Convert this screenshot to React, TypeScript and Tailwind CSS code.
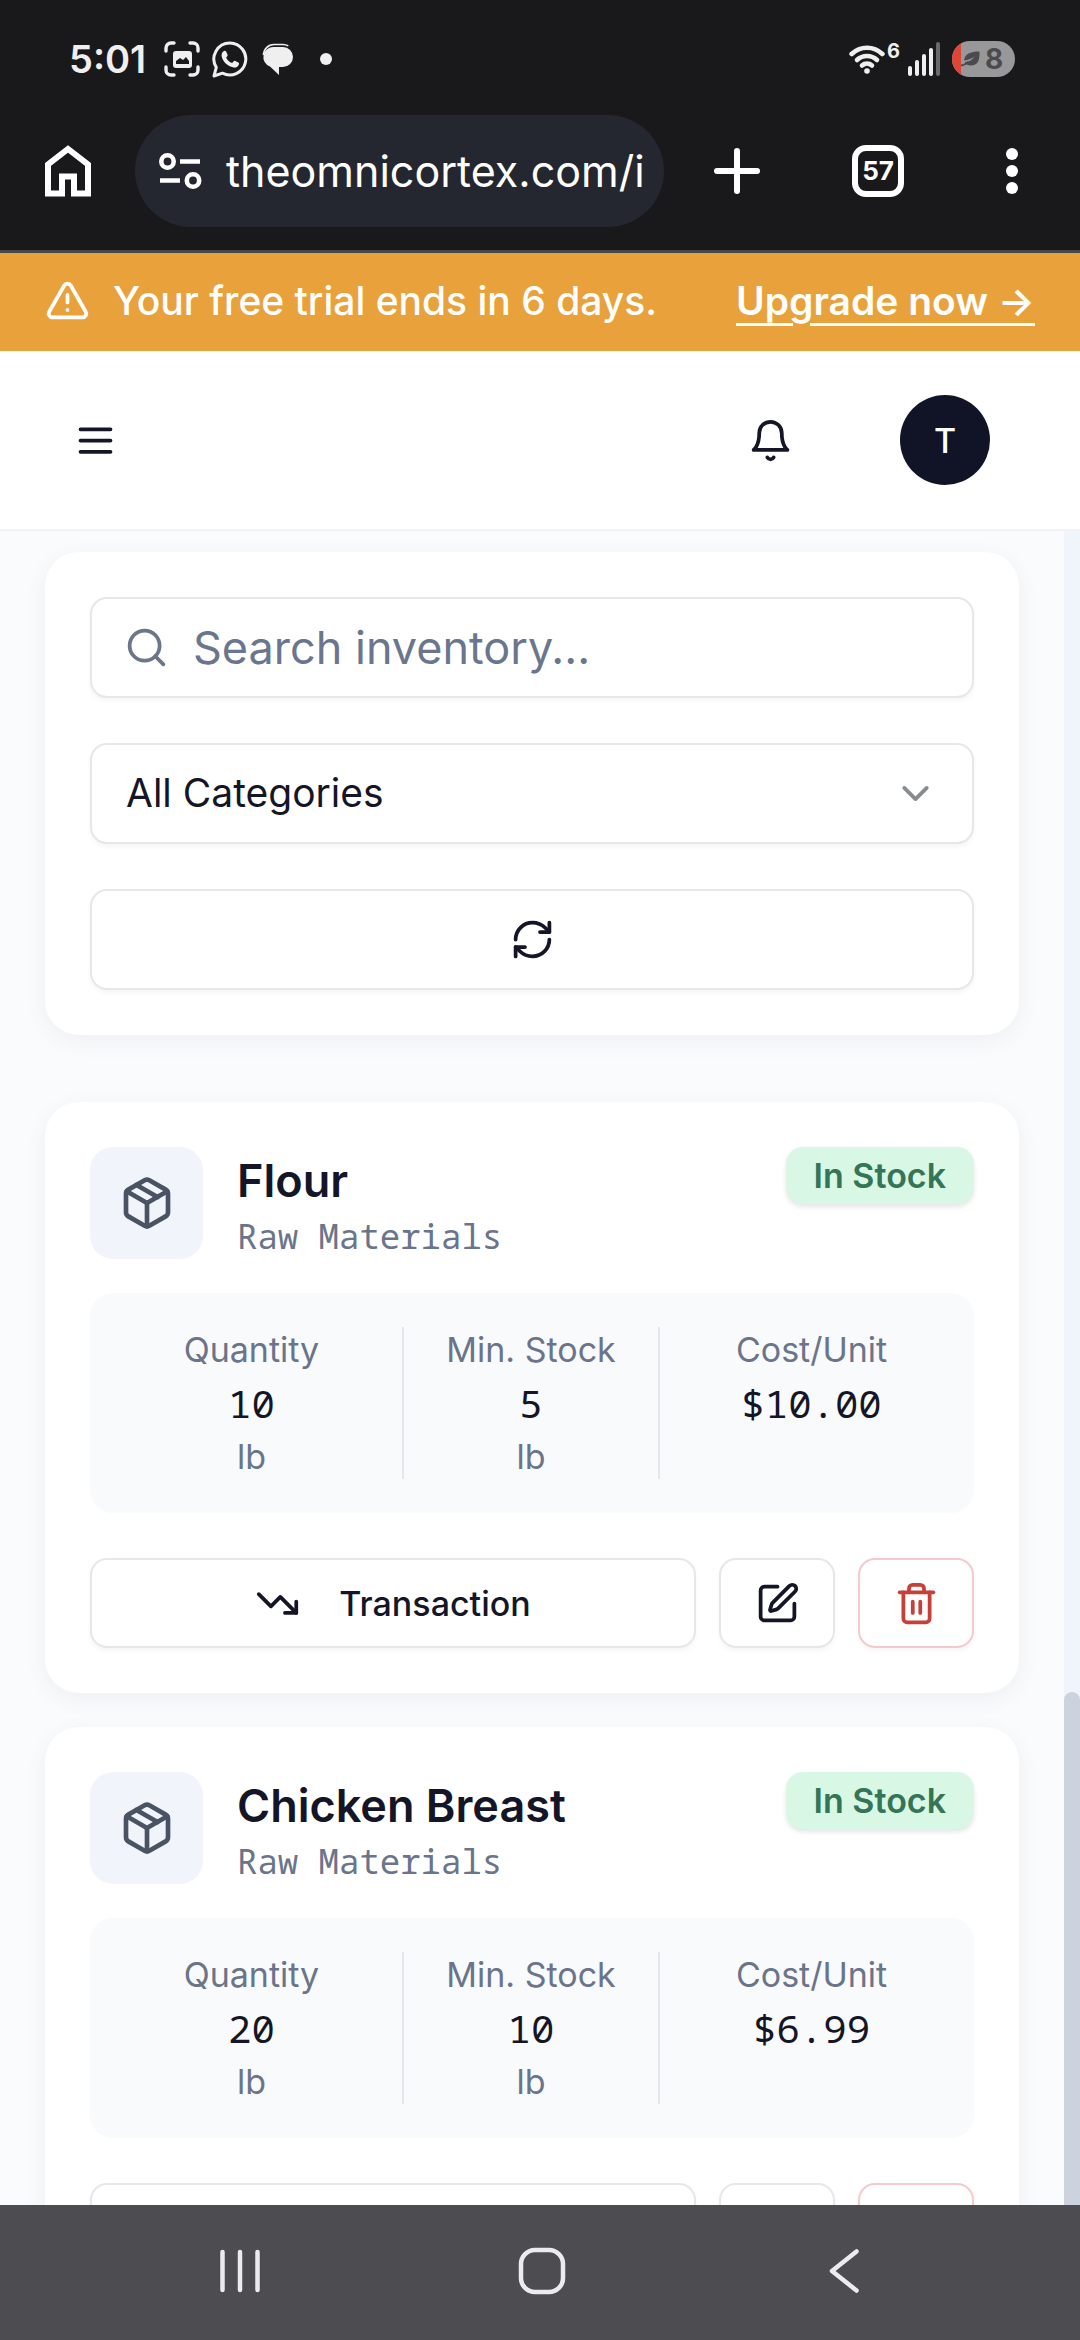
import { useState, type ReactNode } from 'react'
import {
  ChevronDown,
  Package,
  RefreshCw,
  Search,
  SquarePen,
  Trash2,
  TrendingDown,
  TriangleAlert,
} from 'lucide-react'

interface InventoryItem {
  id: string
  name: string
  category: string
  status: string
  quantity: number
  minStock: number
  unit: string
  cost: number
}

const items: InventoryItem[] = [
  {
    id: 'flour',
    name: 'Flour',
    category: 'Raw Materials',
    status: 'In Stock',
    quantity: 10,
    minStock: 5,
    unit: 'lb',
    cost: 10,
  },
  {
    id: 'chicken-breast',
    name: 'Chicken Breast',
    category: 'Raw Materials',
    status: 'In Stock',
    quantity: 20,
    minStock: 10,
    unit: 'lb',
    cost: 6.99,
  },
]

const mono = "font-['Noto_Sans_Mono','Liberation_Mono',monospace]"
const cardStyle = 'rounded-[34px] bg-white p-[45px] shadow-[0_6px_24px_rgba(15,23,42,0.05)]'
const fieldStyle =
  'h-[101px] w-full rounded-[17px] border-2 border-[#e5e7e9] bg-white shadow-[0_3px_5px_rgba(0,0,0,0.04)]'

function StatusBar() {
  return (
    <div className="flex h-[115px] items-center justify-between pt-[3px] pr-[65px] pl-[69px] text-[#efefef]">
      <div className="flex items-center">
        <span className="text-[38px] leading-10 font-semibold">5:01</span>
        <svg className="ml-[18px] h-9 w-9" viewBox="0 0 36 36" fill="none" aria-hidden="true">
          <path
            d="M2 10V7a5 5 0 0 1 5-5h3M26 2h3a5 5 0 0 1 5 5v3M34 26v3a5 5 0 0 1-5 5h-3M10 34H7a5 5 0 0 1-5-5v-3"
            stroke="currentColor"
            strokeWidth="3.4"
            strokeLinecap="round"
          />
          <rect x="9" y="10" width="19" height="17" rx="3" fill="currentColor" />
          <path d="M12 23v-3l4-3 3 2 3-3 3 4v3z" fill="#19191b" />
        </svg>
        <svg className="ml-3 h-[37px] w-9" viewBox="0 0 36 37" fill="none" aria-hidden="true">
          <path
            d="M18 2a16 16 0 1 1-7.6 30.2L2 35l2.3-8.6A16 16 0 0 1 18 2z"
            stroke="currentColor"
            strokeWidth="3"
            strokeLinejoin="round"
          />
          <path
            d="M11.5 10.3c.9-.9 2.1-.7 2.6.3l1.4 3c.3.7.1 1.3-.4 1.9l-1 1.2c1.4 2.6 3.3 4.3 6 5.4l1.4-1.7c.5-.6 1.1-.7 1.8-.4l3 1.5c.8.4.9 1.1.6 1.9-.8 2.3-3 3.5-5.3 3-6.3-1.4-10.6-5.5-11.9-11-.4-1.9.3-3.9 1.8-5.1z"
            fill="currentColor"
          />
        </svg>
        <svg className="ml-3 h-8 w-9" viewBox="0 0 36 32" fill="none" aria-hidden="true">
          <path d="M14 4h9a10 10 0 0 1 0 20h-4v8l-9-8.6A10 10 0 0 1 14 4z" fill="currentColor" />
          <path
            d="M3.5 12A10.5 10.5 0 0 1 14 1.5h9c2 0 3.8.5 5.3 1.4"
            stroke="currentColor"
            strokeWidth="1.6"
          />
        </svg>
        <span className="ml-6 h-3 w-3 rounded-full bg-[#efefef]" />
      </div>
      <div className="flex items-center">
        <svg className="h-[30px] w-9" viewBox="0 0 36 30" fill="none" aria-hidden="true">
          <g stroke="currentColor" strokeWidth="4.6" strokeLinecap="round">
            <path d="M2.6 10a22 22 0 0 1 30.8 0" />
            <path d="M8 16a14.5 14.5 0 0 1 20 0" />
            <path d="M13 21.5a7.5 7.5 0 0 1 10 0" />
          </g>
          <circle cx="18" cy="27" r="2.8" fill="currentColor" />
        </svg>
        <span className="mb-4 ml-0.5 text-[20px] leading-5 font-bold">6</span>
        <svg className="ml-2 h-[34px] w-8" viewBox="0 0 32 34" aria-hidden="true">
          <g fill="currentColor">
            <rect x="0" y="24" width="4" height="10" rx="2" />
            <rect x="7" y="18" width="4" height="16" rx="2" />
            <rect x="14" y="12" width="4" height="22" rx="2" />
            <rect x="21" y="6" width="4" height="28" rx="2" />
            <rect x="28" y="0" width="4" height="34" rx="2" fill="#69696a" />
          </g>
        </svg>
        <div className="ml-3 flex h-9 w-[63px] items-center overflow-hidden rounded-full bg-[#98989a] text-[#4b4b4d]">
          <span className="h-full w-[9px] bg-[#de4737]" />
          <svg className="h-5 w-5" viewBox="0 0 20 20" fill="none" aria-hidden="true">
            <path
              d="M18.5 2.5c.5 9-2 14-8.500 14-3 0-5-1-6-3 5-1 7.500-3 9.500-6-3 2-5.500 3.500-10.500 4C4 5 9 2.500 18.500 2.500z"
              fill="currentColor"
            />
            <path d="M0 16.5c3-.2 5-1.500 7-3.500" stroke="currentColor" strokeWidth="2" />
          </svg>
          <span className="ml-1 text-[28px] leading-8 font-bold">8</span>
        </div>
      </div>
    </div>
  )
}

function BrowserBar() {
  return (
    <div className="flex h-[138px] items-start border-b-[3px] border-[#474748] pr-12 pl-[45px] text-white">
      <button type="button" aria-label="Home" className="flex h-28 items-center">
        <svg className="h-[52px] w-[46px]" viewBox="0 0 46 52" fill="none" aria-hidden="true">
          <path d="M3 19.5v29h14v-17h12v17h14v-29L23 4z" stroke="currentColor" strokeWidth="6" />
        </svg>
      </button>
      <div className="ml-[44px] flex h-28 min-w-0 flex-1 items-center rounded-full bg-[#24272f] pl-6">
        <svg className="h-[38px] w-[43px] shrink-0" viewBox="0 0 43 38" fill="none" aria-hidden="true">
          <g stroke="currentColor" strokeWidth="4.6">
            <circle cx="8.5" cy="9.5" r="6.2" />
            <path d="M21 9.5h20M1 28.5h20" />
            <circle cx="34" cy="28.5" r="6.2" />
          </g>
        </svg>
        <span className="ml-6 whitespace-nowrap text-[43px] leading-[56px]">theomnicortex.com/i</span>
      </div>
      <button type="button" aria-label="New tab" className="ml-[50px] flex h-28 items-center">
        <svg className="h-[46px] w-[46px]" viewBox="0 0 46 46" aria-hidden="true">
          <path d="M23 3v40M3 23h40" stroke="currentColor" strokeWidth="6" strokeLinecap="round" />
        </svg>
      </button>
      <button type="button" aria-label="Tabs" className="ml-[92px] flex h-28 items-center">
        <span className="flex h-[52px] w-[52px] items-center justify-center rounded-[14px] border-[6px] border-white text-[26px] leading-7 font-bold">
          57
        </span>
      </button>
      <button type="button" aria-label="Menu" className="ml-[88px] flex h-28 items-center px-[14px]">
        <svg className="h-12 w-3" viewBox="0 0 12 48" fill="currentColor" aria-hidden="true">
          <circle cx="6" cy="7" r="6" />
          <circle cx="6" cy="24" r="6" />
          <circle cx="6" cy="41" r="6" />
        </svg>
      </button>
    </div>
  )
}

function TrialBanner() {
  return (
    <div className="flex h-[98px] items-center justify-between bg-[#e9a23b] px-[45px] pb-[3px] text-[39px] leading-[56px] text-white">
      <div className="flex items-center gap-[23px]">
        <TriangleAlert size={45} strokeWidth={2} />
        <span className="font-medium">Your free trial ends in 6 days.</span>
      </div>
      <a href="#upgrade" className="font-semibold underline decoration-[3px] underline-offset-8">
        Upgrade now →
      </a>
    </div>
  )
}

function AppHeader() {
  return (
    <header className="flex h-[180px] items-center justify-between border-b-2 border-[#f0f2f5] bg-white px-[45px] text-[#141627]">
      <button type="button" aria-label="Open navigation" className="flex h-[101px] w-[101px] items-center justify-center">
        <svg className="h-[45px] w-[45px]" viewBox="0 0 24 24" aria-hidden="true">
          <path d="M4 6h16M4 12h16M4 18h16" stroke="currentColor" strokeWidth="2" strokeLinecap="round" />
        </svg>
      </button>
      <div className="flex items-center gap-[34px]">
        <button type="button" aria-label="Notifications" className="flex h-[101px] w-[101px] items-center justify-center">
          <svg className="h-[45px] w-[45px]" viewBox="0 0 24 24" fill="none" aria-hidden="true">
            <g stroke="currentColor" strokeWidth="2" strokeLinecap="round" strokeLinejoin="round">
              <path d="M6 8a6 6 0 0 1 12 0c0 7 3 9 3 9H3s3-2 3-9" />
              <path d="M10.3 21a1.94 1.94 0 0 0 3.4 0" />
            </g>
          </svg>
        </button>
        <button type="button" aria-label="Account" className="px-[45px]">
          <span className="flex h-[90px] w-[90px] items-center justify-center rounded-full bg-[#101426] text-[34px] font-medium text-white">
            T
          </span>
        </button>
      </div>
    </header>
  )
}

function Filters() {
  const [search, setSearch] = useState('')
  const [category, setCategory] = useState('all')

  return (
    <section className={`${cardStyle} flex flex-col gap-[45px]`}>
      <div className="relative">
        <Search size={45} className="absolute top-[28px] left-[34px] text-[#6b7688]" />
        <input
          type="text"
          aria-label="Search inventory"
          placeholder="Search inventory..."
          value={search}
          onChange={(e) => setSearch(e.target.value)}
          className={`${fieldStyle} block pr-[34px] pl-[101px] text-[45px] placeholder:text-[#6a768d]`}
        />
      </div>
      <div className="relative">
        <select
          aria-label="Category"
          value={category}
          onChange={(e) => setCategory(e.target.value)}
          className={`${fieldStyle} block appearance-none px-[34px] text-[39px] text-[#141627]`}
        >
          <option value="all">All Categories</option>
        </select>
        <ChevronDown size={45} className="pointer-events-none absolute top-[28px] right-[36px] text-[#888c8f]" />
      </div>
      <button type="button" aria-label="Refresh" className={`${fieldStyle} flex items-center justify-center text-[#141627]`}>
        <RefreshCw size={45} />
      </button>
    </section>
  )
}

function Stat({ label, value, unit }: { label: string; value: ReactNode; unit?: string }) {
  return (
    <div className="flex flex-col gap-[3px] text-center text-[34px] leading-[45px] text-[#6a748a]">
      <dt>{label}</dt>
      <dd className={`${mono} text-[39px] leading-[56px] text-[#141627]`}>{value}</dd>
      {unit && <dd>{unit}</dd>}
    </div>
  )
}

function ItemCard({ item }: { item: InventoryItem }) {
  const buttonStyle =
    'flex h-[90px] items-center justify-center rounded-[17px] border-2 bg-white shadow-[0_3px_5px_rgba(0,0,0,0.04)]'

  return (
    <article className={cardStyle}>
      <div className="flex items-start justify-between">
        <div className="flex items-center gap-[34px]">
          <div className="flex h-28 w-[113px] items-center justify-center rounded-[23px] bg-[#f1f5fb] text-[#4a5363]">
            <Package size={56} />
          </div>
          <div>
            <h3 className="text-[45px] leading-[67px] font-semibold text-[#141627]">{item.name}</h3>
            <p className={`${mono} text-[34px] leading-[45px] text-[#6a748a]`}>{item.category}</p>
          </div>
        </div>
        <span className="flex h-[57px] items-center rounded-[17px] bg-[#d9f7e5] px-[28px] text-[34px] leading-[45px] font-semibold text-[#347558] shadow-[0_3px_5px_rgba(0,0,0,0.1)]">
          {item.status}
        </span>
      </div>

      <dl className="mt-[34px] grid grid-cols-[13fr_11fr_13fr] divide-x-2 divide-[#e5e7ea] rounded-[23px] bg-[#f9fafc] px-[11px] py-[34px]">
        <Stat label="Quantity" value={item.quantity} unit={item.unit} />
        <Stat label="Min. Stock" value={item.minStock} unit={item.unit} />
        <Stat label="Cost/Unit" value={`$${item.cost.toFixed(2)}`} />
      </dl>

      <div className="mt-[45px] flex gap-[23px]">
        <button
          type="button"
          className={`${buttonStyle} flex-1 gap-[39px] border-[#e5e7e9] text-[34px] font-medium text-[#141627]`}
        >
          <TrendingDown size={45} />
          Transaction
        </button>
        <button type="button" aria-label={`Edit ${item.name}`} className={`${buttonStyle} w-[116px] border-[#e5e7e9] text-[#141627]`}>
          <SquarePen size={45} />
        </button>
        <button type="button" aria-label={`Delete ${item.name}`} className={`${buttonStyle} w-[116px] border-[#f4cbcd] text-[#c83f38]`}>
          <Trash2 size={45} />
        </button>
      </div>
    </article>
  )
}

function NavigationBar() {
  return (
    <nav className="flex h-[135px] shrink-0 items-center bg-[#4d4c50] pr-[85px] pb-1 pl-[89px] text-[#ececee]">
      <button type="button" aria-label="Recent apps" className="flex flex-1 justify-center">
        <svg className="h-12 w-12" viewBox="0 0 48 48" aria-hidden="true">
          <path d="M6.5 5v38M24 5v38M41.5 5v38" stroke="currentColor" strokeWidth="4.5" strokeLinecap="round" />
        </svg>
      </button>
      <button type="button" aria-label="Home screen" className="flex flex-1 justify-center">
        <svg className="h-12 w-12" viewBox="0 0 48 48" fill="none" aria-hidden="true">
          <rect x="3" y="3" width="42" height="42" rx="14" stroke="currentColor" strokeWidth="4.5" />
        </svg>
      </button>
      <button type="button" aria-label="Back" className="flex flex-1 justify-center">
        <svg className="h-12 w-12" viewBox="0 0 48 48" fill="none" aria-hidden="true">
          <path
            d="M36.5 4.5 12 24l24.5 19.5"
            stroke="currentColor"
            strokeWidth="4.5"
            strokeLinecap="round"
            strokeLinejoin="round"
          />
        </svg>
      </button>
    </nav>
  )
}

export default function App() {
  return (
    <div className="flex h-screen flex-col overflow-hidden bg-[#fafbfd] font-['Inter',sans-serif]">
      <div className="shrink-0 bg-[#19191b]">
        <StatusBar />
        <BrowserBar />
      </div>
      <div className="shrink-0">
        <TrialBanner />
        <AppHeader />
      </div>

      <div className="flex min-h-0 flex-1">
        <main className="min-w-0 flex-1 overflow-hidden px-[45px] pt-[21px]">
          <Filters />
          <div className="mt-[67px] flex flex-col gap-[34px]">
            {items.map((item) => (
              <ItemCard key={item.id} item={item} />
            ))}
          </div>
        </main>
        <div className="flex w-4 shrink-0 flex-col justify-end bg-[#f0f4fb]">
          <div className="h-[513px] rounded-t-full bg-[#ccd3df]" />
        </div>
      </div>

      <NavigationBar />
    </div>
  )
}
